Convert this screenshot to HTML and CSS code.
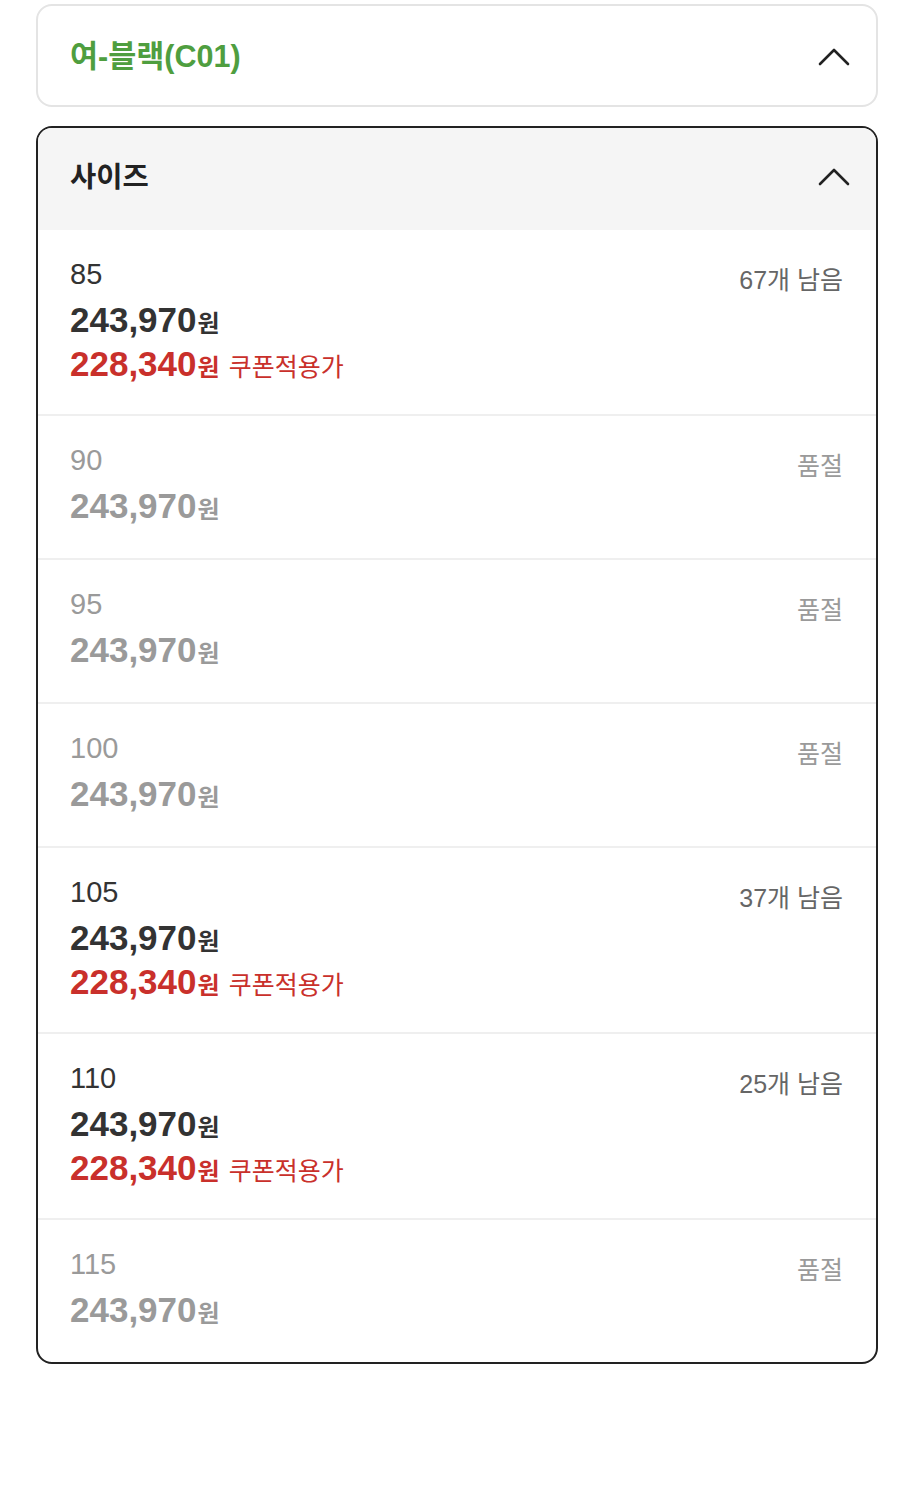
FILE: index.html
```html
<!DOCTYPE html>
<html lang="ko">
<head>
<meta charset="utf-8">
<link rel="stylesheet" href="styles.css">
</head>
<body>
<div class="wrap">
  <div class="box color-box">
    <span class="color-name">여-블랙(C01)</span>
    <svg class="chev" width="32" height="20" viewBox="0 0 32 20"><path d="M2 18 L16 4 L30 18" fill="none" stroke="#222" stroke-width="2.6" stroke-linecap="round" stroke-linejoin="round"/></svg>
  </div>

  <div class="box size-box">
    <div class="size-head">
      <span class="size-title">사이즈</span>
      <svg class="chev" width="32" height="20" viewBox="0 0 32 20"><path d="M2 18 L16 4 L30 18" fill="none" stroke="#222" stroke-width="2.6" stroke-linecap="round" stroke-linejoin="round"/></svg>
    </div>

    <div class="row">
      <div class="info">
        <div class="label">85</div>
        <div class="price">243,970<span class="won">원</span></div>
        <div class="sale">228,340<span class="won">원</span><span class="coupon">쿠폰적용가</span></div>
      </div>
      <div class="stock">67개 남음</div>
    </div>

    <div class="row out">
      <div class="info">
        <div class="label">90</div>
        <div class="price">243,970<span class="won">원</span></div>
      </div>
      <div class="stock">품절</div>
    </div>

    <div class="row out">
      <div class="info">
        <div class="label">95</div>
        <div class="price">243,970<span class="won">원</span></div>
      </div>
      <div class="stock">품절</div>
    </div>

    <div class="row out">
      <div class="info">
        <div class="label">100</div>
        <div class="price">243,970<span class="won">원</span></div>
      </div>
      <div class="stock">품절</div>
    </div>

    <div class="row">
      <div class="info">
        <div class="label">105</div>
        <div class="price">243,970<span class="won">원</span></div>
        <div class="sale">228,340<span class="won">원</span><span class="coupon">쿠폰적용가</span></div>
      </div>
      <div class="stock">37개 남음</div>
    </div>

    <div class="row">
      <div class="info">
        <div class="label">110</div>
        <div class="price">243,970<span class="won">원</span></div>
        <div class="sale">228,340<span class="won">원</span><span class="coupon">쿠폰적용가</span></div>
      </div>
      <div class="stock">25개 남음</div>
    </div>

    <div class="row out last">
      <div class="info">
        <div class="label">115</div>
        <div class="price">243,970<span class="won">원</span></div>
      </div>
      <div class="stock">품절</div>
    </div>
  </div>
</div>
</body>
</html>
```

FILE: styles.css
```css
html, body {
  margin: 0;
  padding: 0;
  background: #fff;
}
body {
  font-family: "Liberation Sans", "Noto Sans CJK KR", sans-serif;
  color: #333;
}
.wrap {
  width: 842px;
  margin-left: 36px;
  padding-top: 4px;
  display: flex;
  flex-direction: column;
  gap: 19px;
}
.box {
  box-sizing: border-box;
  background: #fff;
}
.color-box {
  height: 103px;
  border: 2px solid #e4e4e4;
  border-radius: 16px;
  display: flex;
  align-items: center;
  justify-content: space-between;
  padding: 0 26px 0 32px;
}
.color-name {
  font-family: "Liberation Sans", "Noto Sans CJK KR", sans-serif;
  font-weight: 700;
  font-size: 30.5px;
  line-height: 40px;
  color: #4f9e3f;
}
.chev { display: block; }
.size-box {
  border: 2px solid #222;
  border-radius: 16px;
  overflow: hidden;
}
.size-head {
  height: 102px;
  background: #f5f5f5;
  display: flex;
  align-items: center;
  justify-content: space-between;
  padding: 0 26px 8px 32px;
  box-sizing: border-box;
}
.size-head .chev { margin-top: 1px; }
.size-title {
  font-family: "Noto Sans CJK KR", sans-serif;
  font-weight: 700;
  font-size: 28.5px;
  line-height: 40px;
  color: #222;
}
.row {
  display: flex;
  justify-content: space-between;
  align-items: flex-start;
  padding: 28px 33px 28px 32px;
  border-bottom: 2px solid #efefef;
}
.row.out { padding-bottom: 30px; }
.row.last { border-bottom: none; }
.info {
  display: flex;
  flex-direction: column;
}
.label {
  font-size: 29px;
  line-height: 32px;
  color: #333;
  margin-bottom: 8px;
}
.price, .sale {
  font-weight: 700;
  font-size: 35px;
  line-height: 44px;
  height: 44px;
  color: #333;
  white-space: nowrap;
}
.sale { color: #c9302b; }
.won {
  font-family: "Noto Sans CJK KR", sans-serif;
  font-size: 24px;
  font-weight: 700;
  margin-left: 1px;
  line-height: 1;
}
.coupon {
  font-family: "Noto Sans CJK KR", sans-serif;
  font-size: 25px;
  font-weight: 400;
  margin-left: 9px;
  line-height: 1;
}
.stock {
  font-family: "Liberation Sans", "Noto Sans CJK KR", sans-serif;
  font-size: 25px;
  line-height: 32px;
  margin-top: 6px;
  color: #666;
}
.out .label, .out .price, .out .stock { color: #9a9a9a; }
```
